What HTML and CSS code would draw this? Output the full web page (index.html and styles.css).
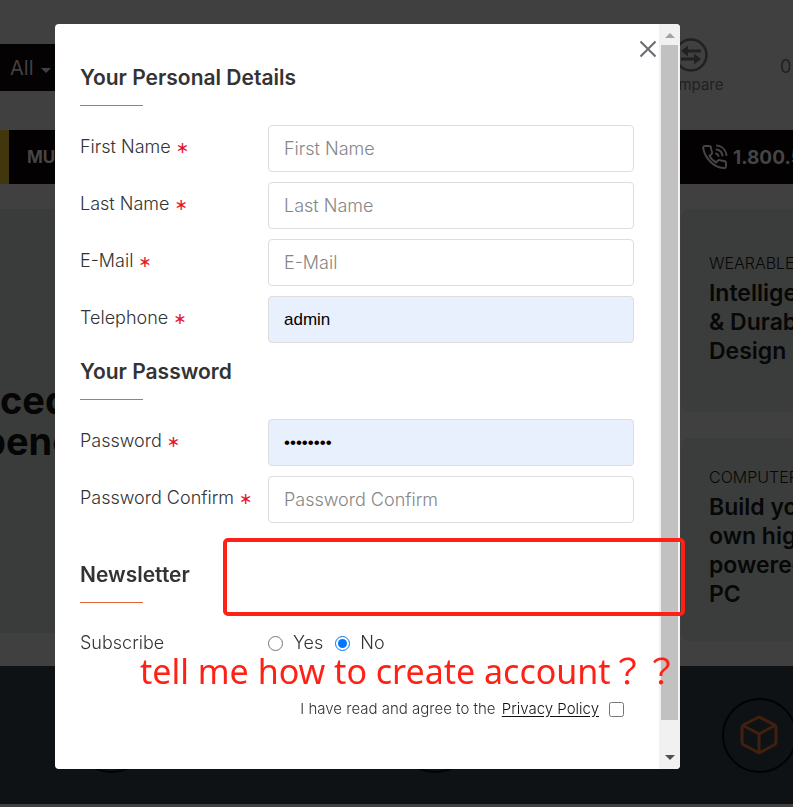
FILE: index.html
```html
<!DOCTYPE html>
<html lang="en">
<head>
<meta charset="utf-8">
<title>Create account</title>
<link rel="stylesheet" href="styles.css">
</head>
<body>
<div class="page">
  <header class="top">
    <button class="category" type="button">All <span class="caret"></span></button>
    <a class="compare" href="#">
      <svg width="34" height="34" viewBox="0 0 34 34" fill="none" stroke="currentColor"><circle cx="17" cy="17" r="15.5" stroke-width="2.5"/><path d="M12 13h15M7 21h15" stroke-width="3"/><path d="M7 13l7-5.500v11zM27 21l-7-5.500v11z" fill="currentColor" stroke="none"/></svg>
      <span>Compare</span>
    </a>
    <span class="count">0</span>
  </header>
  <nav class="nav">
    <a class="menu" href="#">MULTI</a>
    <a class="phone" href="#">
      <svg width="26" height="26" viewBox="0 0 26 26" fill="none" stroke="currentColor" stroke-width="2" stroke-linecap="round" stroke-linejoin="round"><path d="M3 2h4c1 0 2 .7 2 2 .2 1.700.5 3 1 4 .3 1 0 1.600-.6 2.200L7.500 12c1.500 2.800 3.700 5 6.500 6.500l1.800-1.800c.6-.6 1.300-.9 2.200-.6 1.200.5 2.500.8 4 1 1.200.2 2 1 2 2v3c0 1.400-1 2.200-2.300 2C11 23 3 14 1.200 4.300 1 3 1.700 2 3 2z"/><path d="M14 9.500c1.300.3 2 1 2.500 2.500M14.500 5.500c3.500.6 5.500 2.800 6 6M15 1.500c5 .6 8.700 4.500 9.500 9.500"/></svg>
      <span>1.800.555.0199</span>
    </a>
  </nav>
  <main class="hero">
    <section class="banner"><p><span>ced</span><span class="outdent">penc</span></p></section>
    <aside class="cards">
      <article class="card"><small>WEARABLES</small><h3>Intelligent<br>&amp; Durable<br>Design</h3></article>
      <article class="card"><small>COMPUTERS</small><h3>Build your<br>own high<br>powered<br>PC</h3></article>
    </aside>
  </main>
  <section class="features">
    <span class="ring"></span>
    <span class="ring"></span>
    <span class="ring"><svg width="38" height="40" viewBox="0 0 38 40" fill="none" stroke="currentColor" stroke-width="3" stroke-linejoin="round"><path d="M19 2l15 7.500q2 1 2 3V27q0 2-2 3L19 38 4 30q-2-1-2-3V12.500q0-2 2-3zM3 10.500L19 19l16-8.500M19 19v19"/></svg></span>
  </section>
</div>

<div class="overlay">
  <div class="dialog" role="dialog" aria-label="Create account">
    <form class="form">
      <button class="close" type="button" aria-label="Close"><svg width="18" height="18" viewBox="0 0 18 18" fill="none" stroke="currentColor" stroke-width="2"><path d="M1.500 1.500l15 15M16.500 1.500l-15 15"/></svg></button>
      <section class="group">
        <h2>Your Personal Details</h2>
        <div class="row"><label class="required" for="first">First Name</label><input id="first" type="text" placeholder="First Name"></div>
        <div class="row"><label class="required" for="last">Last Name</label><input id="last" type="text" placeholder="Last Name"></div>
        <div class="row"><label class="required" for="email">E-Mail</label><input id="email" type="email" placeholder="E-Mail"></div>
        <div class="row"><label class="required" for="phone">Telephone</label><input class="filled" id="phone" type="tel" value="admin"></div>
      </section>
      <section class="group">
        <h2>Your Password</h2>
        <div class="row"><label class="required" for="pass">Password</label><input class="filled" id="pass" type="password" value="password"></div>
        <div class="row"><label class="required" for="confirm">Password Confirm</label><input id="confirm" type="password" placeholder="Password Confirm"></div>
      </section>
      <section class="group news">
        <h2>Newsletter</h2>
        <div class="row choice" role="radiogroup" aria-labelledby="sub"><span id="sub">Subscribe</span>
          <div class="options"><label><input type="radio" name="subscribe">Yes</label><label><input type="radio" name="subscribe" checked>No</label></div>
        </div>
      </section>
      <div class="agree"><label for="agree">I have read and agree to the <a href="#">Privacy Policy</a></label><input id="agree" type="checkbox"></div>
    </form>
    <div class="scroll" aria-hidden="true"><span class="up"></span><span class="thumb"></span><span class="down"></span></div>
    <div class="mark"></div>
    <p class="note">tell me how to create account？？</p>
  </div>
</div>
</body>
</html>
```
FILE: styles.css
```css
* { box-sizing: border-box; }
body {
  margin: 0;
  font-family: Inter, "Liberation Sans", sans-serif;
  background: #404040;
  color: #333;
}
h2, h3, p { margin: 0; }
a { color: inherit; text-decoration: none; }
button { font: inherit; border: 0; cursor: pointer; }

/* Page behind the dialog */
.page { height: 100vh; overflow: hidden; }
.top { display: flex; height: 130px; align-items: flex-start; }
.category {
  width: 100px; height: 47px; margin-top: 44px; padding: 0 10px;
  background: #040203; color: #404142; font-size: 20px; text-align: left;
}
.caret {
  display: inline-block; margin-left: 2px; vertical-align: 2px;
  border: 5px solid transparent; border-top-color: currentColor; border-bottom: 0;
}
.compare {
  display: flex; flex-direction: column; align-items: center; gap: 4px;
  width: 64px; margin: 38px 57px 0 auto; color: #202122; font-size: 15px; line-height: 18px;
}
.count { width: 13px; margin-top: 54px; color: #202122; font-size: 18px; line-height: 26px; }
.nav {
  display: flex; align-items: center; justify-content: space-between; height: 54px;
  border-left: 9px solid #42360c; background: #030102; color: #454545; font-weight: 700;
}
.menu { padding-left: 18px; font-size: 17px; }
.phone { display: flex; align-items: center; gap: 5px; width: 91px; font-size: 19px; white-space: nowrap; }
.phone svg { flex: none; }
.hero { display: flex; gap: 25px; padding: 25px 0; }
.banner { flex: 1; height: 424px; background: #3a3c3b; color: #050505; }
.banner p { padding-top: 171px; font-size: 38px; font-weight: 700; line-height: 41px; }
.banner span { display: block; }
.banner .outdent { margin-left: -18px; }
.cards { display: grid; gap: 26px; width: 112px; }
.card {
  height: 203px; padding: 43px 0 0 28px; border-radius: 8px 0 0 8px;
  background: #3b3d3c; color: #070707; white-space: nowrap; overflow: hidden;
}
.card + .card { padding-top: 28px; }
.card small { display: block; font-size: 16px; font-weight: 300; line-height: 22px; }
.card h3 { padding-top: 5px; font-size: 23px; font-weight: 600; line-height: 29px; }
.features {
  display: grid; grid-template-columns: repeat(3, 324px); align-items: center; justify-items: center;
  height: 138px; margin-left: -51px; background: #0e1214;
}
.ring {
  display: grid; place-items: center; width: 75px; height: 75px;
  border: 2px solid #020303; border-radius: 50%; color: #42200f;
}

/* Registration dialog */
.overlay { position: fixed; inset: 0; padding: 24px 113px 38px 55px; }
.dialog { position: relative; display: flex; height: 100%; border-radius: 4px; background: #fff; }
.form { flex: 1; padding: 40px 25px 0; }
.close {
  position: absolute; top: 16px; right: 23px; display: grid; padding: 0;
  background: none; color: #6b6a70;
}
.group { display: grid; gap: 10px; margin-bottom: 15px; }
.group.news { margin-top: 38px; margin-bottom: 35px; }
h2 { margin-bottom: 9px; font-size: 21px; font-weight: 600; line-height: 28px; }
h2::after { content: ""; display: block; width: 63px; height: 1px; margin-top: 13px; background: #e3673a; }
.row { display: grid; grid-template-columns: 188px 1fr; font-size: 18px; font-weight: 300; line-height: 44px; }
.required::after { content: "∗"; margin-left: 5px; color: #e6142d; font: 16px "DejaVu Sans", sans-serif; }
.row > input {
  width: 100%; height: 47px; padding: 0 15px; border: 1px solid #ddd; border-radius: 4px;
  background: #fff; color: #000; font: 300 18px Inter, sans-serif;
}
.row > input::placeholder { color: #868686; }
.row > input.filled { background: #e8f0fe; font: 17px "Liberation Sans", sans-serif; }
.choice { line-height: 42px; }
.options { display: flex; gap: 12px; }
.options label { display: flex; align-items: center; gap: 10px; }
input[type="radio"], input[type="checkbox"] { width: 15px; height: 15px; margin: 0; accent-color: #0075ff; }
.agree { display: flex; align-items: center; justify-content: flex-end; gap: 10px; padding-right: 10px; font-size: 15px; font-weight: 300; line-height: 20px; }
.agree a { margin-left: 2px; color: #111; text-decoration: underline; text-underline-offset: 2px; }
.scroll {
  display: flex; flex-direction: column; align-items: center; width: 21px; padding: 9px 2px;
  border-radius: 0 4px 4px 0; background: #f1f1f1;
}
.up, .down { border: 5px solid transparent; }
.up { border-bottom-color: #a3a3a3; border-top: 0; }
.down { border-top-color: #505050; border-bottom: 0; }
.thumb { width: 17px; flex: 1; margin: 7px 0 35px; background: #c1c1c1; }

/* Annotations over the dialog */
.mark { position: absolute; top: 514px; left: 168px; right: -5px; height: 78px; border: 4px solid #ff2116; border-radius: 5px; }
.note {
  position: absolute; top: 625px; left: 85px; color: #ff2116; white-space: nowrap;
  font: 34px/44px "Noto Sans", "Noto Sans CJK TC", sans-serif;
}
```
